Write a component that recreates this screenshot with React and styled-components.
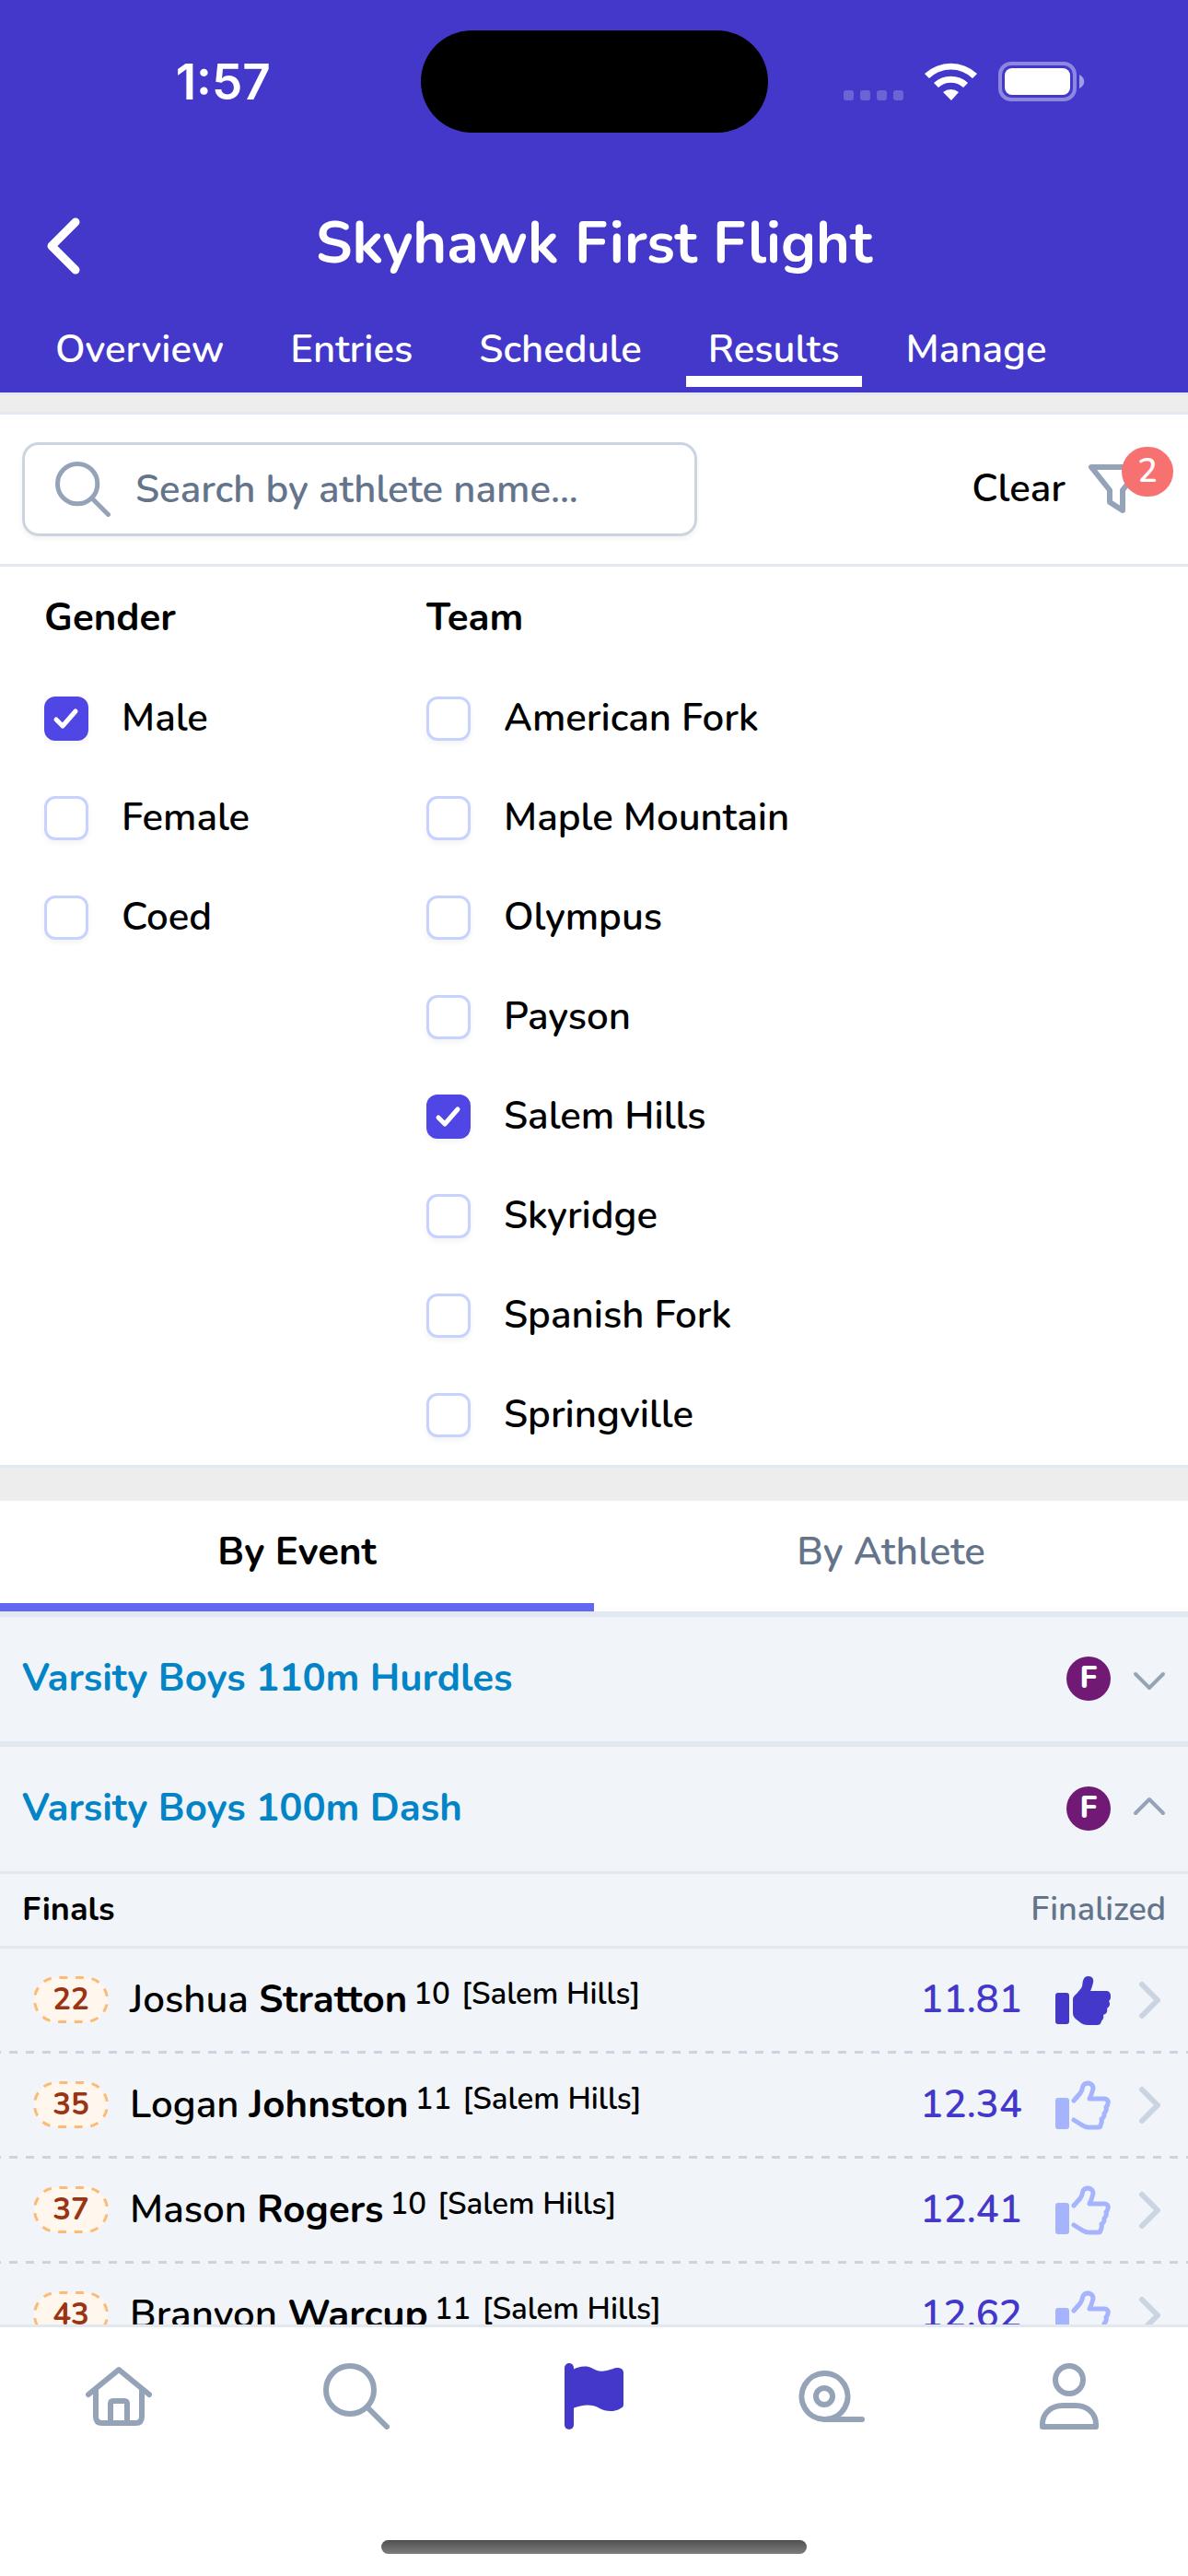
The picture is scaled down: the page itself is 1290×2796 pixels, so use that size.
import { useState } from "react";
import styled, { createGlobalStyle } from "styled-components";

const tabs = ["Overview", "Entries", "Schedule", "Results", "Manage"];
const genders = ["Male", "Female", "Coed"];
const teams = [
  "American Fork",
  "Maple Mountain",
  "Olympus",
  "Payson",
  "Salem Hills",
  "Skyridge",
  "Spanish Fork",
  "Springville",
];
const results = [
  { bib: 22, first: "Joshua", last: "Stratton", grade: 10, team: "Salem Hills", mark: "11.81", liked: true },
  { bib: 35, first: "Logan", last: "Johnston", grade: 11, team: "Salem Hills", mark: "12.34" },
  { bib: 37, first: "Mason", last: "Rogers", grade: 10, team: "Salem Hills", mark: "12.41" },
  { bib: 43, first: "Branyon", last: "Warcup", grade: 11, team: "Salem Hills", mark: "12.62" },
];

function SearchIcon({ size }) {
  return (
    <Icon $width={size} viewBox="0 0 72 72" $stroke={6}>
      <circle cx="29" cy="29" r="26" />
      <path d="M48 48l21 21" />
    </Icon>
  );
}

function Thumb({ filled }) {
  return (
    <svg width="60" height="54" viewBox="0 0 60 54" fill="currentColor" aria-hidden="true">
      <rect x="0" y="19" width="15" height="34" rx="3" />
      {filled ? (
        <path d="M19 26c0-3 2-4 4-6l5-6c2-3 1-5 2-8 1-4 3-5 6-5 4 0 6 3 5 7-1 4-2 7-3 9h17c3 0 5 2 5 5 0 3 0 4-2 6 2 3 1 6-2 8 1 4-1 6-4 7 1 4-1 5-2 7-1 3-2 4-5 4H35c-3 0-5-1-7-2-5-4-9-6-9-11z" />
      ) : (
        <path
          d="M20 22l7-8c3-4 2-6 3-8 1-2 3-3 6-3 4 1 5 3 5 6-1 4-2 7-4 11h16c3 0 5 2 4 5 0 2-1 3-2 4 1 3 0 5-2 7 0 3 0 4-3 6 1 3 0 5-1 7 0 1-1 2-3 2H36c-4 0-6-2-8-3l-8-5"
          fill="none"
          stroke="currentColor"
          strokeWidth="5"
          strokeLinecap="round"
          strokeLinejoin="round"
        />
      )}
    </svg>
  );
}

function StatusBar() {
  return (
    <Status>
      <Clock>1:57</Clock>
      <Island />
      <svg width="264" height="44" viewBox="0 0 264 44" fill="#fff" aria-hidden="true">
        <g opacity="0.22">
          <rect x="1" y="31" width="11" height="11" rx="3" />
          <rect x="19" y="31" width="11" height="11" rx="3" />
          <rect x="37" y="31" width="11" height="11" rx="3" />
          <rect x="55" y="31" width="11" height="11" rx="3" />
        </g>
        <path d="M89 13a42 42 0 0 1 57 0l-5 5a34 34 0 0 0-47 0z" />
        <path d="M99 23a27 27 0 0 1 37 0l-5 5a20 20 0 0 0-27 0z" />
        <path d="M109 33a14 14 0 0 1 17 0l-8 9z" />
        <rect x="171" y="2" width="81" height="39" rx="12" fill="none" stroke="#fff" strokeWidth="4" opacity="0.4" />
        <rect x="176" y="7" width="71" height="29" rx="8" />
        <path d="M257 14c7 3 7 12 0 15z" opacity="0.5" />
      </svg>
    </Status>
  );
}

function CheckRow({ label, checked, onChange }) {
  return (
    <CheckLabel>
      <CheckCell>
        <Checkbox type="checkbox" checked={checked} onChange={onChange} />
        {checked && (
          <svg width="30" height="30" viewBox="0 0 30 30" aria-hidden="true">
            <path d="M4 16l7 7L25 7" fill="none" stroke="#fff" strokeWidth="5" strokeLinecap="round" strokeLinejoin="round" />
          </svg>
        )}
      </CheckCell>
      {label}
    </CheckLabel>
  );
}

function EventRow({ title, open, onClick }) {
  return (
    <EventHeader type="button" aria-expanded={open} $open={open} onClick={onClick}>
      <EventTitle>{title}</EventTitle>
      <FinalBadge>F</FinalBadge>
      <Icon $width={40} viewBox="0 0 40 28" $stroke={4}>
        <path d={open ? "M5 19L20 4l15 15" : "M5 9l15 15L35 9"} />
      </Icon>
    </EventHeader>
  );
}

function App() {
  const [tab, setTab] = useState("Results");
  const [view, setView] = useState("By Event");
  const [picked, setPicked] = useState(["Male", "Salem Hills"]);
  const [query, setQuery] = useState("");
  const [opened, setOpened] = useState(["100"]);

  const toggle = (list, setList, value) =>
    setList(list.includes(value) ? list.filter((v) => v !== value) : [...list, value]);

  return (
    <Page>
      <GlobalStyle />
      <Header>
        <StatusBar />
        <TitleBar>
          <BackButton type="button" aria-label="Back">
            <svg width="37" height="62" viewBox="0 0 37 62" fill="none" aria-hidden="true">
              <path d="M32 5L6 31l26 26" stroke="#fff" strokeWidth="9" strokeLinecap="round" strokeLinejoin="round" />
            </svg>
          </BackButton>
          <Title>Skyhawk First Flight</Title>
        </TitleBar>
        <TabNav>
          {tabs.map((name) => (
            <TabButton key={name} type="button" $active={name === tab} onClick={() => setTab(name)}>
              {name}
            </TabButton>
          ))}
        </TabNav>
      </Header>

      <Content>
        <Divider $height={24} />
        <Toolbar>
          <SearchBox>
            <SearchIcon size={60} />
            <SearchInput
              type="text"
              aria-label="Search by athlete name"
              placeholder="Search by athlete name..."
              value={query}
              onChange={(e) => setQuery(e.target.value)}
            />
          </SearchBox>
          <ClearButton type="button" onClick={() => setPicked([])}>
            Clear
          </ClearButton>
          <FilterButton type="button" aria-label="Filters">
            <Icon $width={64} viewBox="0 0 64 64" $stroke={6}>
              <path d="M5 8h54L39 33v22L25 46V33z" />
            </Icon>
            {picked.length > 0 && <Count>{picked.length}</Count>}
          </FilterButton>
        </Toolbar>

        <Filters>
          <FilterGroup>
            <Legend>Gender</Legend>
            {genders.map((name) => (
              <CheckRow
                key={name}
                label={name}
                checked={picked.includes(name)}
                onChange={() => toggle(picked, setPicked, name)}
              />
            ))}
          </FilterGroup>
          <FilterGroup>
            <Legend>Team</Legend>
            {teams.map((name) => (
              <CheckRow
                key={name}
                label={name}
                checked={picked.includes(name)}
                onChange={() => toggle(picked, setPicked, name)}
              />
            ))}
          </FilterGroup>
        </Filters>
        <Divider $height={39} />

        <ViewTabs>
          {["By Event", "By Athlete"].map((name) => (
            <ViewTab key={name} type="button" $active={name === view} onClick={() => setView(name)}>
              {name}
            </ViewTab>
          ))}
        </ViewTabs>

        <EventRow
          title="Varsity Boys 110m Hurdles"
          open={opened.includes("110")}
          onClick={() => toggle(opened, setOpened, "110")}
        />
        <EventRow
          title="Varsity Boys 100m Dash"
          open={opened.includes("100")}
          onClick={() => toggle(opened, setOpened, "100")}
        />
        {opened.includes("100") && (
          <>
            <RoundRow>
              <strong>Finals</strong>
              <span>Finalized</span>
            </RoundRow>
            {results.map((r) => (
              <ResultRow key={r.bib}>
                <Bib>
                  <svg width="82" height="51" viewBox="0 0 82 51" aria-hidden="true">
                    <rect
                      x="1.5"
                      y="1.5"
                      width="79"
                      height="48"
                      rx="24"
                      pathLength="216"
                      fill="#fff7ed"
                      stroke="#fdba74"
                      strokeWidth="3"
                      strokeDasharray="9 9"
                      strokeDashoffset="-3"
                    />
                  </svg>
                  <span>{r.bib}</span>
                </Bib>
                <Athlete>
                  {r.first} <b>{r.last}</b>
                  <Grade>{r.grade}</Grade>
                  <School>[{r.team}]</School>
                </Athlete>
                <Mark>{r.mark}</Mark>
                <LikeButton type="button" aria-label="Like" $liked={r.liked}>
                  <Thumb filled={r.liked} />
                </LikeButton>
                <svg width="30" height="42" viewBox="0 0 30 42" fill="none" aria-hidden="true">
                  <path d="M4 4l17 17L4 38" stroke="#cbd5e1" strokeWidth="6" strokeLinecap="round" strokeLinejoin="round" />
                </svg>
              </ResultRow>
            ))}
          </>
        )}
      </Content>

      <BottomNav>
        <NavItems>
          <NavButton type="button" aria-label="Home">
            <Icon $width={72} viewBox="0 0 72 72" $stroke={6}>
              <path d="M3 34L36 7l33 27" />
              <path d="M11 30v28q0 7 7 7h36q7 0 7-7V30" />
              <path d="M27 65V44q0-3 3-3h12q3 0 3 3v21" />
            </Icon>
          </NavButton>
          <NavButton type="button" aria-label="Search">
            <SearchIcon size={72} />
          </NavButton>
          <NavButton type="button" aria-label="Meets" $active>
            <svg width="72" height="72" viewBox="0 0 72 72" fill="currentColor" aria-hidden="true">
              <rect x="4" y="0" width="10" height="72" rx="5" />
              <path d="M13 7c6-3 13-5 20-2 6 3 9 5 17 3 5-1 8-3 11-3s7 1 7 5v35c0 2-1 3-3 4-8 5-17 3-23 0-9-5-18-4-29 0z" />
            </svg>
          </NavButton>
          <NavButton type="button" aria-label="Records">
            <Icon $width={72} viewBox="0 0 72 72" $stroke={6}>
              <path d="M28 61a25 25 0 1 1 1 0M28 61h41" />
              <circle cx="28" cy="36" r="9" />
            </Icon>
          </NavButton>
          <NavButton type="button" aria-label="Profile">
            <Icon $width={72} viewBox="0 0 72 72" $stroke={6}>
              <circle cx="36" cy="18" r="15" />
              <path d="M7 69v-3c0-11 9-20 22-20h14c13 0 22 9 22 20v3z" />
            </Icon>
          </NavButton>
        </NavItems>
        <HomeIndicator />
      </BottomNav>
    </Page>
  );
}

const GlobalStyle = createGlobalStyle`
  * {
    box-sizing: border-box;
  }

  body {
    margin: 0;
    background: #fff;
    color: #000;
    font-family: Nunito, "Open Sans", sans-serif;
    font-size: 42px;
    font-weight: 600;
    line-height: 60px;
  }

  b,
  strong {
    font-weight: 700;
  }

  button,
  input {
    margin: 0;
    padding: 0;
    border: 0;
    background: none;
    color: inherit;
    font: inherit;
  }

  svg {
    display: block;
    flex: none;
  }
`;

const Icon = styled.svg.attrs({ "aria-hidden": true })`
  width: ${({ $width }) => $width}px;
  fill: none;
  stroke: #94a3b8;
  stroke-width: ${({ $stroke }) => $stroke};
  stroke-linecap: round;
  stroke-linejoin: round;
`;

const Page = styled.div`
  display: flex;
  flex-direction: column;
  height: 100vh;
`;

const Header = styled.header`
  flex: none;
  background: #4338ca;
  color: #fff;
`;

const Status = styled.div`
  display: grid;
  grid-template-columns: 1fr auto 1fr;
  align-items: center;
  height: 177px;

  > svg {
    margin-left: 81px;
  }
`;

const Clock = styled.span`
  padding: 0 28px 0 56px;
  font-family: Inter, sans-serif;
  font-size: 53px;
  font-weight: 600;
  text-align: center;
`;

const Island = styled.div`
  width: 377px;
  height: 111px;
  border-radius: 56px;
  background: #000;
`;

const TitleBar = styled.div`
  display: grid;
  grid-template-columns: 90px 1fr 90px;
  align-items: center;
  height: 180px;
`;

const BackButton = styled.button`
  padding-left: 50px;
`;

const Title = styled.h1`
  margin: 0;
  padding-bottom: 6px;
  font-size: 63px;
  font-weight: 700;
  text-align: center;
`;

const TabNav = styled.nav`
  display: flex;
  gap: 24px;
  height: 69px;
  padding: 0 36px 6px;
`;

const TabButton = styled.button`
  padding: 0 24px 6px;
  border-bottom: 12px solid ${({ $active }) => ($active ? "#fff" : "transparent")};
  line-height: 40px;
`;

const Content = styled.main`
  flex: 1;
  min-height: 0;
  overflow: hidden;
  background: #f1f5f9;
`;

const Divider = styled.div`
  height: ${({ $height }) => $height}px;
  border-top: 3px solid #e2e8f0;
  border-bottom: ${({ $height }) => ($height < 30 ? "3px solid #e2e8f0" : "0")};
  background: #ededed;
`;

const Toolbar = styled.div`
  display: flex;
  align-items: center;
  padding: 30px 24px;
  border-bottom: 3px solid #e2e8f0;
  background: #fff;
`;

const SearchBox = styled.div`
  display: flex;
  align-items: center;
  gap: 27px;
  width: 59%;
  height: 102px;
  margin-right: auto;
  padding: 0 33px;
  border: 3px solid #cbd5e1;
  border-radius: 18px;
  box-shadow: 0 3px 6px rgba(0, 0, 0, 0.05);
`;

const SearchInput = styled.input`
  flex: 1;
  min-width: 0;
  padding-top: 2px;
  outline: none;

  &::placeholder {
    color: #64748b;
    opacity: 1;
  }
`;

const ClearButton = styled.button`
  margin-right: 23px;
`;

const FilterButton = styled.button`
  position: relative;
  margin-right: 22px;
`;

const Count = styled.span`
  position: absolute;
  top: -14px;
  right: -30px;
  width: 56px;
  height: 54px;
  border-radius: 28px;
  background: #f87171;
  color: #fff;
  font-size: 36px;
  line-height: 54px;
  text-align: center;
`;

const Filters = styled.div`
  display: grid;
  grid-template-columns: 415px 1fr;
  padding: 26px 48px 0;
  background: #fff;
`;

const FilterGroup = styled.fieldset`
  min-width: 0;
  margin: 0;
  padding: 0;
  border: 0;
`;

const Legend = styled.legend`
  padding: 0;
  margin-bottom: 25px;
  font-weight: 700;
`;

const CheckLabel = styled.label`
  display: flex;
  align-items: center;
  gap: 36px;
  height: 108px;
`;

const CheckCell = styled.span`
  display: grid;
  place-items: center;

  > * {
    grid-area: 1 / 1;
  }

  svg {
    pointer-events: none;
  }
`;

const Checkbox = styled.input`
  appearance: none;
  width: 48px;
  height: 48px;
  border: 3px solid #c7d2fe;
  border-radius: 12px;
  background: #fff;
  box-shadow: 0 3px 6px rgba(0, 0, 0, 0.05);

  &:checked {
    border-color: #4f46e5;
    background: #4f46e5;
  }
`;

const ViewTabs = styled.div`
  display: flex;
  border-bottom: 6px solid #e2e8f0;
  background: #fff;
`;

const ViewTab = styled.button`
  flex: 1;
  height: 120px;
  border-bottom: 9px solid ${({ $active }) => ($active ? "#6366f1" : "transparent")};
  color: ${({ $active }) => ($active ? "#000" : "#64748b")};
  font-weight: ${({ $active }) => ($active ? 700 : 600)};
`;

const EventHeader = styled.button`
  display: flex;
  align-items: center;
  gap: 22px;
  width: 100%;
  padding: 37px 22px 38px 24px;
  border-bottom: ${({ $open }) => ($open ? 3 : 6)}px solid #e2e8f0;
  text-align: left;
`;

const EventTitle = styled.span`
  flex: 1;
  color: #0284c7;
  font-weight: 700;
`;

const FinalBadge = styled.span`
  width: 48px;
  height: 48px;
  border-radius: 24px;
  background: #701a75;
  color: #fff;
  font-size: 33px;
  font-weight: 800;
  line-height: 48px;
  text-align: center;
`;

const RoundRow = styled.div`
  display: flex;
  justify-content: space-between;
  padding: 9px 24px;
  border-bottom: 3px solid #e2e8f0;
  font-size: 36px;

  span {
    color: #64748b;
  }
`;

const ResultRow = styled.div`
  display: flex;
  align-items: center;
  height: 114px;
  padding: 0 24px 3px 36px;
  background: linear-gradient(90deg, #cbd5e1 50%, transparent 50%) 10px 100% / 18px 3px repeat-x;
`;

const Bib = styled.span`
  display: grid;
  place-items: center;
  margin-right: 23px;
  color: #9a3412;
  font-size: 33px;
  font-weight: 700;
  line-height: 51px;

  > * {
    grid-area: 1 / 1;
  }
`;

const Athlete = styled.span`
  flex: 1;
`;

const Grade = styled.sup`
  margin-left: 7px;
  font-size: 33px;
  line-height: 33px;
  vertical-align: 9px;
`;

const School = styled(Grade)`
  margin-left: 12px;
`;

const Mark = styled.span`
  color: #4338ca;
`;

const LikeButton = styled.button`
  margin: 0 30px 0 36px;
  color: ${({ $liked }) => ($liked ? "#4338ca" : "#a5b4fc")};
`;

const BottomNav = styled.footer`
  display: flex;
  flex: none;
  flex-direction: column;
  align-items: center;
  justify-content: space-between;
  height: 273px;
  padding: 39px 0 24px;
  border-top: 3px solid #e2e8f0;
  background: #fff;
`;

const NavItems = styled.nav`
  display: grid;
  grid-template-columns: repeat(5, 1fr);
  width: 100%;
`;

const NavButton = styled.button`
  display: grid;
  justify-content: center;
  color: ${({ $active }) => ($active ? "#4338ca" : "#94a3b8")};
`;

const HomeIndicator = styled.div`
  width: 462px;
  height: 15px;
  border-radius: 8px;
  background: linear-gradient(#505050, #7c7c7c);
`;

export default App;
